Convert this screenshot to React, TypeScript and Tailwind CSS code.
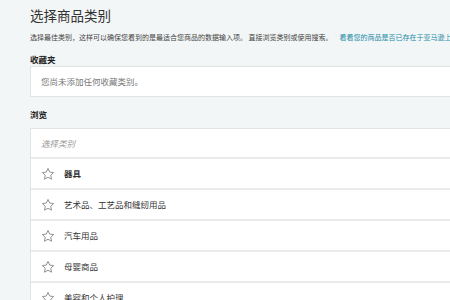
import type { FC } from "react";

const Star: FC = () => (
  <svg width="14" height="14" viewBox="0 0 24 24" fill="none" stroke="#8a8a8a" strokeWidth="1.6" strokeLinejoin="round">
    <path d="M12 2.5l2.9 6.2 6.8.8-5 4.7 1.3 6.7L12 17.6l-6 3.3 1.3-6.7-5-4.7 6.8-.8z" />
  </svg>
);

const categories = ["器具", "艺术品、工艺品和缝纫用品", "汽车用品", "母婴商品", "美容和个人护理"];

function App() {
  return (
    <div className="w-[450px] h-[300px] overflow-hidden bg-[#f3f6f6] text-[#333]" style={{ fontFamily: '"Noto Sans CJK SC", "Liberation Sans", sans-serif' }}>
      <div className="w-[520px] pl-[30px] pt-[6px]">
        <h1 className="text-[13.5px] leading-[18px] text-[#333]">选择商品类别</h1>
        <p className="mt-[8px] text-[7px] leading-[10px] whitespace-nowrap text-[#444]">
          选择最佳类别，这样可以确保您看到的是最适合您商品的数据输入项。 直接浏览类别或使用搜索。
          <span className="ml-[7px] text-[#1b8ba8]">看看您的商品是否已存在于亚马逊上</span>
        </p>
        <div className="mt-[11px] text-[8.5px] leading-[12px] font-bold text-[#222]">收藏夹</div>
        <div className="mt-[1px] h-[31px] flex items-center pl-[10px] bg-white border border-[#e3e3e3] text-[8.5px] text-[#777]">
          您尚未添加任何收藏类别。
        </div>
        <div className="mt-[11px] text-[8.5px] leading-[12px] font-bold text-[#222]">浏览</div>
        <div className="mt-[8px] bg-white border-l border-t border-[#e3e3e3]">
          <div className="h-[30px] flex items-center pl-[10px] border-b-2 border-[#ebebeb] text-[8.5px] italic text-[#999]">
            选择类别
          </div>
          {categories.map((c, i) => (
            <div key={c} className="h-[31px] flex items-center pl-[10px] border-b-2 border-[#ebebeb] text-[8.5px] text-[#333]">
              <Star />
              <span className={"ml-[9px] " + (i === 0 ? "font-bold" : "")}>{c}</span>
            </div>
          ))}
        </div>
      </div>
    </div>
  );
}

export default App;
